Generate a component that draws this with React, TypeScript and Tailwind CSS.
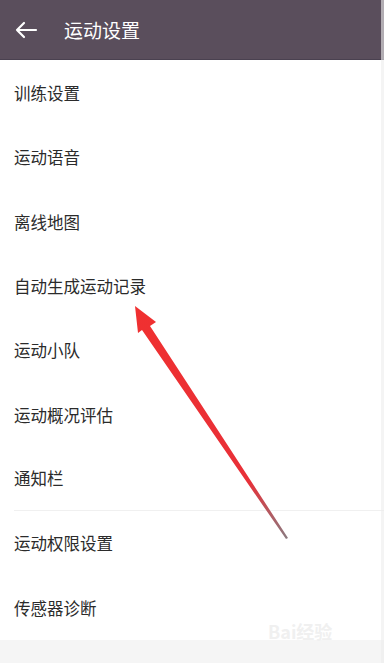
import React from "react";

const items = [
  "训练设置",
  "运动语音",
  "离线地图",
  "自动生成运动记录",
  "运动小队",
  "运动概况评估",
  "通知栏",
  "运动权限设置",
  "传感器诊断",
];

function App() {
  return (
    <div
      className="relative w-[384px] h-[663px] bg-[#f5f5f5] overflow-hidden"
      style={{ fontFamily: '"Noto Sans CJK SC", "Noto Sans", sans-serif' }}
    >
      {/* header */}
      <div className="h-[60px] bg-[#5a4e5c] border-b border-[#4a4150] flex items-center">
        <svg width="24" height="18" viewBox="0 0 24 18" className="ml-[14px]">
          <path
            d="M22 9H3M10 2L3 9l7 7"
            fill="none"
            stroke="#fff"
            strokeWidth="2.2"
            strokeLinecap="round"
            strokeLinejoin="round"
          />
        </svg>
        <span className="ml-[26px] text-white text-[19px] leading-none">运动设置</span>
      </div>

      {/* list */}
      <div className="bg-white h-[580px] flex flex-col pt-[1px]">
        {items.map((item, i) => (
          <div
            key={item}
            className={
              i === 6
                ? "h-[64.5px] flex items-center border-b border-[#f0f0f0] ml-[14px]"
                : "h-[64.5px] flex items-center ml-[14px]"
            }
          >
            <span className="text-[16.5px] text-[#2b2b2b] leading-none">{item}</span>
          </div>
        ))}
      </div>

      {/* annotation arrow */}
      <svg
        className="absolute left-0 top-0 pointer-events-none"
        width="384"
        height="663"
        viewBox="0 0 384 663"
      >
        <defs>
          <linearGradient id="shaft" gradientUnits="userSpaceOnUse" x1="135" y1="306" x2="288" y2="538">
            <stop offset="0" stopColor="#f03030" />
            <stop offset="0.75" stopColor="#e83038" />
            <stop offset="1" stopColor="#8a7a80" />
          </linearGradient>
        </defs>
        <path d="M135 306 L156 322 L150 326 L288 538 L286 539 L142 330 L138 333 Z" fill="url(#shaft)" />
      </svg>

      {/* faint watermark */}
      <div className="absolute left-[268px] top-[618px] text-[18px] text-[#f0f0f0] font-bold">Bai经验</div>

      <div className="absolute right-0 top-0 w-[3px] h-[663px] bg-[#ededed] opacity-60" />
    </div>
  );
}

export default App;
